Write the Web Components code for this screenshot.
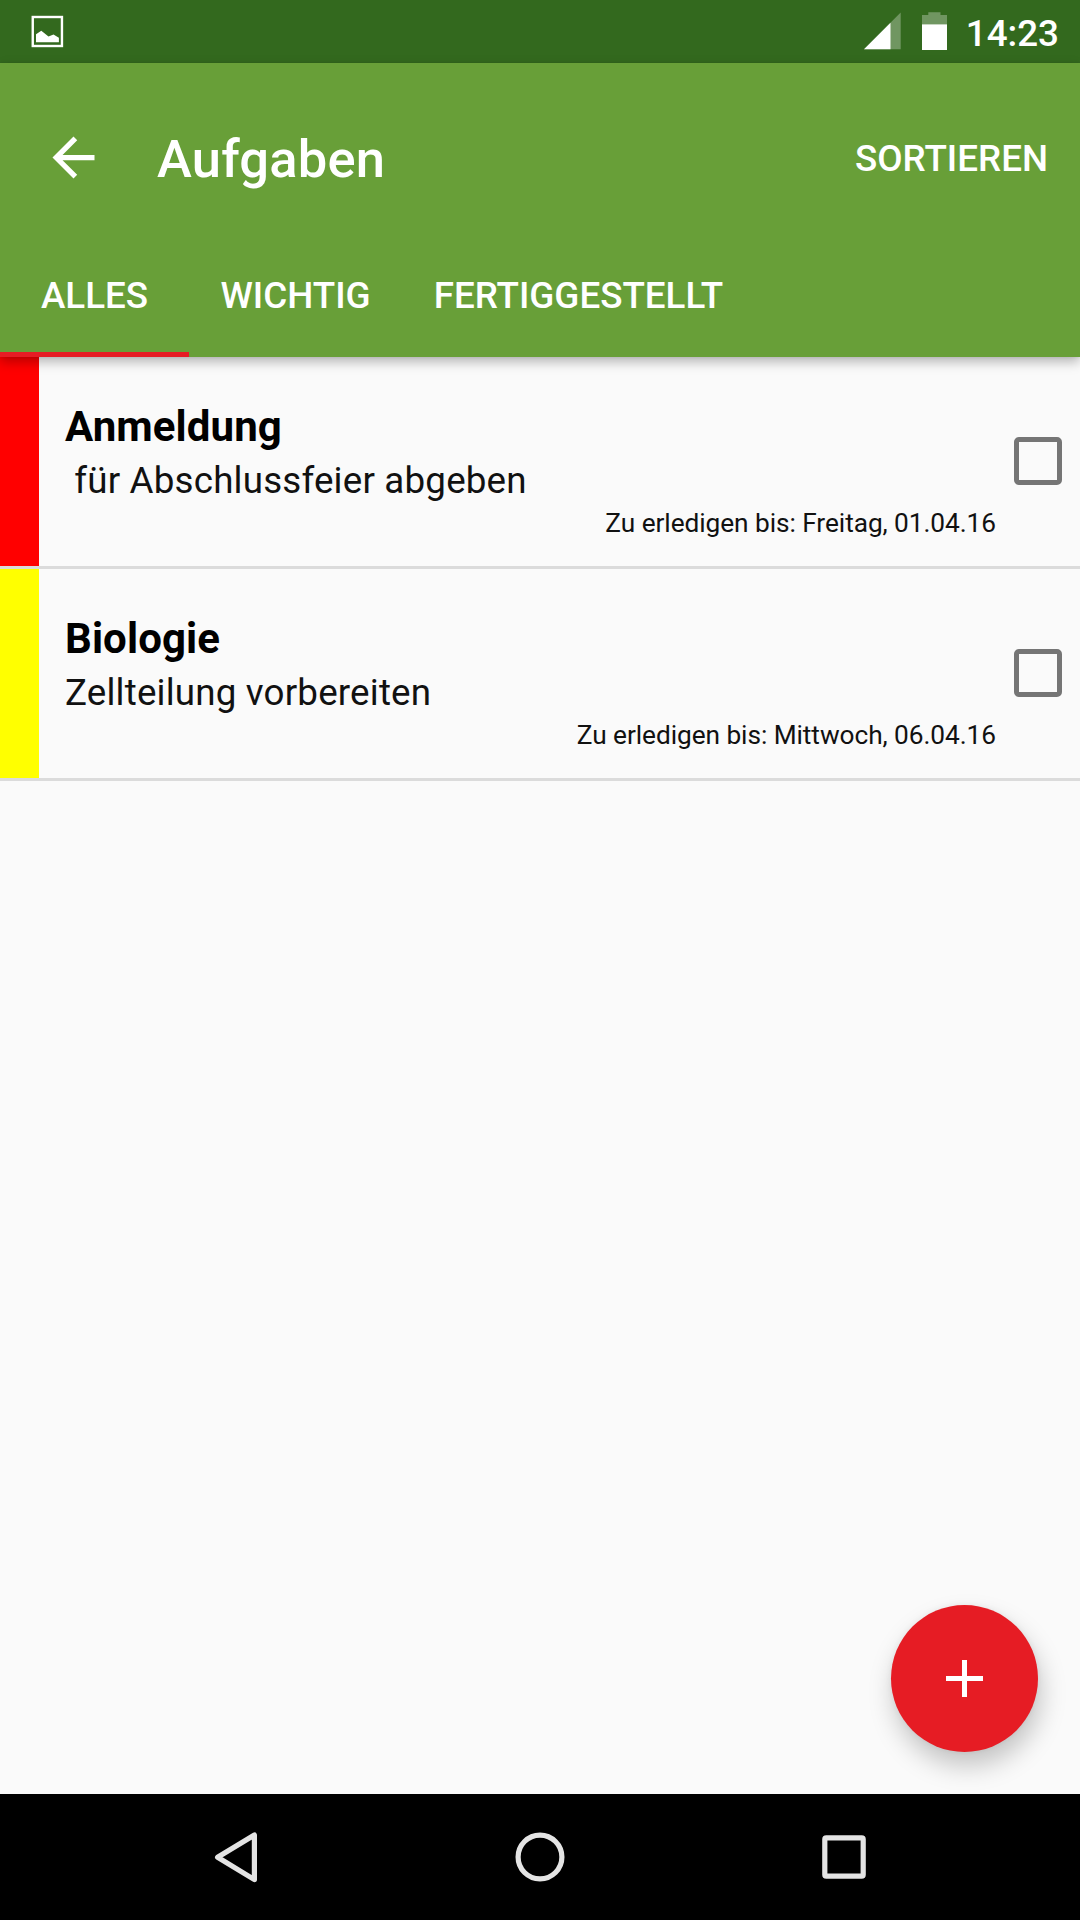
<!DOCTYPE html>
<html lang="de">
<head>
<meta charset="utf-8">
<title>Aufgaben</title>
<style>
  body {
    margin: 0;
    background: #fafafa;
    font-family: Roboto, "Noto Sans", sans-serif;
  }
</style>
</head>
<body>

<task-screen>
  <status-bar slot="status">14:23</status-bar>
  <app-bar slot="header">
    Aufgaben
    <span slot="action">SORTIEREN</span>
    <app-tab slot="tabs" active>ALLES</app-tab>
    <app-tab slot="tabs">WICHTIG</app-tab>
    <app-tab slot="tabs">FERTIGGESTELLT</app-tab>
  </app-bar>
  <task-item style="--priority: #ff0000">
    <span slot="title">Anmeldung</span>
    <span slot="text"> für Abschlussfeier abgeben</span>
    <span slot="due">Zu erledigen bis: Freitag, 01.04.16</span>
  </task-item>
  <task-item style="--priority: #ffff00">
    <span slot="title">Biologie</span>
    <span slot="text">Zellteilung vorbereiten</span>
    <span slot="due">Zu erledigen bis: Mittwoch, 06.04.16</span>
  </task-item>
  <fab-button slot="fab"></fab-button>
  <nav-bar slot="nav"></nav-bar>
</task-screen>

<script>
  // Creates the open shadow root and fills it from a template.
  class BaseElement extends HTMLElement {
    connectedCallback() {
      if (this.shadowRoot) return;
      const template = document.createElement("template");
      template.innerHTML = this.constructor.markup;
      this.attachShadow({ mode: "open" });
      this.shadowRoot.appendChild(template.content.cloneNode(true));
    }
  }

  /*
   * Whole screen: status, header, list, navigation.
   */
  class TaskScreen extends BaseElement {
    static markup = `
      <style>
        :host {
          display: flex;
          flex-direction: column;
          width: 1080px;
          height: 1920px;
          overflow: hidden;
        }
        main {
          flex: 1;
          position: relative;
        }
        ::slotted(fab-button) {
          position: absolute;
          right: 42px;
          bottom: 42px;
        }
      </style>
      <slot name="status"></slot>
      <slot name="header"></slot>
      <main>
        <slot></slot>
        <slot name="fab"></slot>
      </main>
      <slot name="nav"></slot>
    `;
  }

  class StatusBar extends BaseElement {
    static markup = `
      <style>
        :host {
          display: flex;
          align-items: center;
          box-sizing: border-box;
          height: 63px;
          padding: 0 21px 0 31px;
          background: #33691e;
          color: #fff;
          font-size: 36.75px;
          font-weight: 500;
          line-height: 43px;
        }
        svg { display: block; }
        .signal { margin-left: auto; }
        .battery { margin: 0 19px 0 21px; }
        .time { padding-top: 3px; }
      </style>
      <svg width="33" height="63" viewBox="0 0 33 63">
        <rect x="1.75" y="17" width="29.2" height="29" fill="none" stroke="#fff" stroke-width="2.4"/>
        <path d="M5 42.3v-8l5.300-3.500 7.200 5.600 5-1.900 5.400 3.300v4.500z" fill="#fff"/>
      </svg>
      <svg class="signal" width="37" height="63" viewBox="0 0 37 63">
        <path d="M0 49.300L36.700 12.600V49.300z" fill="#fff" fill-opacity=".3"/>
        <path d="M0 49.300L26.500 22.800V49.300z" fill="#fff"/>
      </svg>
      <svg class="battery" width="25" height="63" viewBox="0 0 25 63">
        <path d="M0 24.300V15h6.300v-2.700h12.200V15H25v9.300z" fill="#fff" fill-opacity=".3"/>
        <path d="M0 24.300h25V50H0z" fill="#fff"/>
      </svg>
      <div class="time"><slot></slot></div>
    `;
  }

  class AppBar extends BaseElement {
    static markup = `
      <style>
        :host {
          display: block;
          position: relative;
          z-index: 1;
          height: 294px;
          background: #689f38;
          color: #fff;
          font-weight: 500;
          box-shadow: 0 5px 11px rgba(0, 0, 0, .27), 0 0 3px rgba(0, 0, 0, .1);
        }
        .toolbar {
          display: flex;
          align-items: center;
          box-sizing: border-box;
          height: 168px;
          padding: 21px 32px 0 42px;
        }
        .toolbar svg { width: 63px; height: 63px; }
        .title {
          flex: 1;
          padding: 2px 0 0 52px;
          font-size: 52.5px;
          letter-spacing: .2px;
          line-height: 62px;
        }
        .action {
          padding-top: 2px;
          font-size: 36.75px;
          line-height: 43px;
        }
        .tabs { display: flex; height: 126px; }
      </style>
      <div class="toolbar">
        <svg viewBox="0 0 24 24"><path fill="#fff" d="M20 11H7.830l5.590-5.590L12 4l-8 8 8 8 1.410-1.410L7.830 13H20z"/></svg>
        <div class="title"><slot></slot></div>
        <div class="action"><slot name="action"></slot></div>
      </div>
      <div class="tabs"><slot name="tabs"></slot></div>
    `;
  }

  class AppTab extends BaseElement {
    static markup = `
      <style>
        :host {
          display: flex;
          align-items: center;
          justify-content: center;
          box-sizing: border-box;
          min-width: 189px;
          padding: 7px 31.5px 5px;
          font-size: 36.75px;
          line-height: 43px;
          border-bottom: 0 solid #e61c24;
        }
        :host([active]) {
          padding-bottom: 0;
          border-bottom-width: 5px;
        }
      </style>
      <slot></slot>
    `;
  }

  /*
   * One row: priority colour, texts, checkbox.
   */
  class TaskItem extends BaseElement {
    static markup = `
      <style>
        :host {
          display: flex;
          height: 209px;
          border-bottom: 3px solid #dbdbdb;
          color: #111;
        }
        .priority { width: 39px; background: var(--priority); }
        .content {
          flex: 1;
          display: flex;
          flex-direction: column;
          padding: 45px 0 0 26px;
        }
        .title {
          color: #000;
          font-size: 42px;
          font-weight: 700;
          letter-spacing: .1px;
          line-height: 49px;
        }
        .text {
          margin-top: 8px;
          font-size: 36.75px;
          letter-spacing: .18px;
          line-height: 43px;
          white-space: pre;
        }
        .due {
          margin-top: 6px;
          font-size: 26.25px;
          letter-spacing: -.06px;
          line-height: 31px;
          text-align: right;
        }
        .box {
          align-self: center;
          box-sizing: border-box;
          width: 48px;
          height: 48px;
          margin: 0 18px 1px 18px;
          border: 5px solid #757575;
          border-radius: 5px;
        }
      </style>
      <div class="priority"></div>
      <div class="content">
        <div class="title"><slot name="title"></slot></div>
        <div class="text"><slot name="text"></slot></div>
        <div class="due"><slot name="due"></slot></div>
      </div>
      <div class="box"></div>
    `;
  }

  class FabButton extends BaseElement {
    static markup = `
      <style>
        :host {
          display: flex;
          align-items: center;
          justify-content: center;
          width: 147px;
          height: 147px;
          border-radius: 50%;
          background: #e61c24;
          box-shadow: 3px 14px 26px rgba(0, 0, 0, .22), 0 0 6px rgba(0, 0, 0, .06);
        }
      </style>
      <svg width="37" height="37" viewBox="0 0 37 37">
        <path d="M16 0h5v16h16v5H21v16h-5V21H0v-5h16z" fill="#fff"/>
      </svg>
    `;
  }

  class NavBar extends BaseElement {
    static markup = `
      <style>
        :host {
          display: flex;
          justify-content: center;
          height: 126px;
          background: #000;
        }
        svg {
          width: 304px;
          height: 126px;
          fill: none;
          stroke: #e4e4e4;
          stroke-width: 5.200;
          stroke-linejoin: round;
        }
      </style>
      <svg viewBox="0 0 304 126"><path d="M133.600 63.300L170.400 41v44.600z"/></svg>
      <svg viewBox="0 0 304 126"><circle cx="152" cy="63" r="21.900"/></svg>
      <svg viewBox="0 0 304 126"><rect x="132.800" y="43.800" width="38.400" height="38.400" rx="1.500"/></svg>
    `;
  }

  customElements.define("task-screen", TaskScreen);
  customElements.define("status-bar", StatusBar);
  customElements.define("app-bar", AppBar);
  customElements.define("app-tab", AppTab);
  customElements.define("task-item", TaskItem);
  customElements.define("fab-button", FabButton);
  customElements.define("nav-bar", NavBar);
</script>
</body>
</html>
